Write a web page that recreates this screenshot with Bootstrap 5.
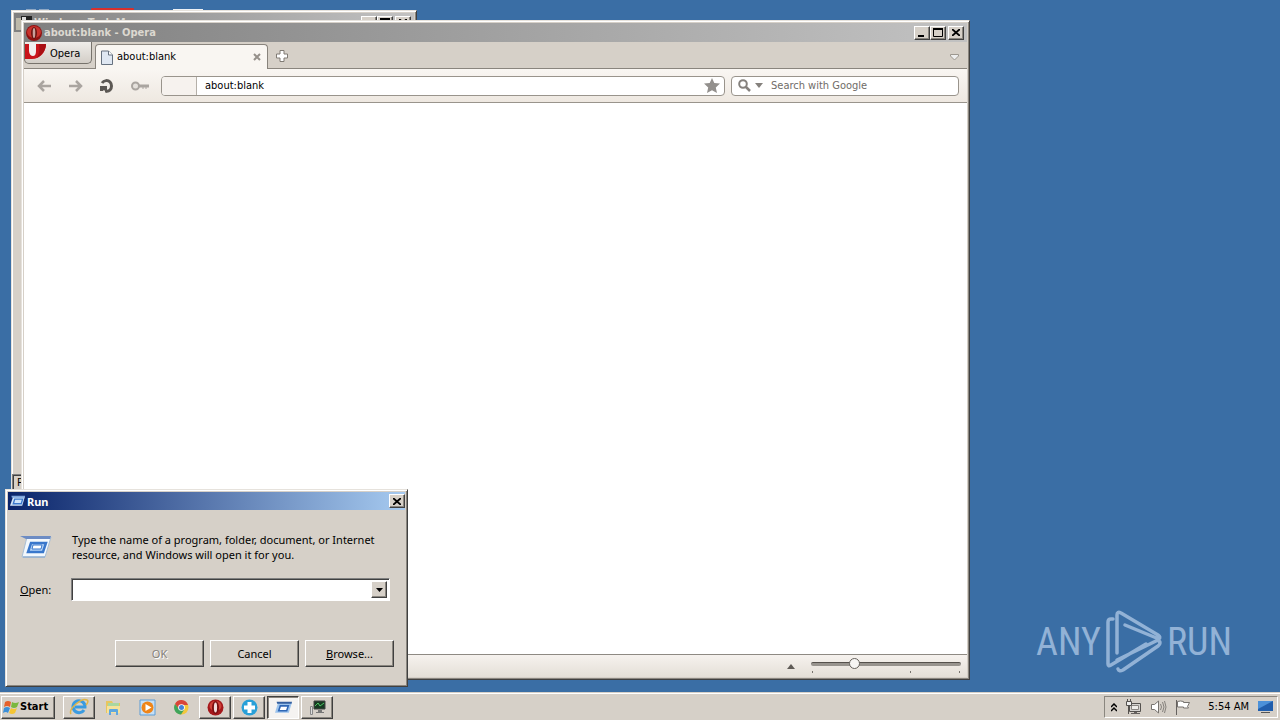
<!DOCTYPE html>
<html lang="en">
<head>
<meta charset="utf-8">
<meta name="viewport" content="width=device-width, initial-scale=1">
<title>Desktop</title>
<link href="https://cdn.jsdelivr.net/npm/bootstrap@5.3.0/dist/css/bootstrap.min.css" rel="stylesheet">
<style>
:root{--face:#d6d0c8;--line:#8a857e}
body{font:11px/16px "DejaVu Sans Condensed","DejaVu Sans",sans-serif;color:#000;background:#3a6ea5}
button,input{font:inherit;color:inherit}
svg{display:block;flex:none}
.desktop{min-height:0}
.win{background:var(--face);border:1px solid;border-color:#e6e2dc #404040 #404040 #e6e2dc;box-shadow:inset 1px 1px #fff,inset -1px -1px #8a867f;padding:2px}
.win-back{left:11px;top:10px;width:406px;bottom:12px;z-index:1}
.win-opera{left:21px;top:20px;right:310px;bottom:12px;z-index:2}
.win-run{left:5px;top:489px;width:403px;height:198px;z-index:3;font-family:"Noto Sans",sans-serif;line-height:15px}
.caption{height:19px;background:linear-gradient(90deg,#808080,#c2c2c2);color:#dcd8d0;font-weight:700;padding:0 3px 0 2px;gap:2px}
.caption-active{height:18px;background:linear-gradient(90deg,#0a246a,#a6caf0);color:#fff}
.sysbtn{width:16px;height:14px;background:var(--face);border:1px solid;border-color:#fff #404040 #404040 #fff;box-shadow:inset -1px -1px #8a867f;padding:0;display:flex;align-items:center;justify-content:center}
.raised{background:var(--face);border:1px solid;border-color:#fff #404040 #404040 #fff;box-shadow:inset -1px -1px #8a867f;padding:0}
.sunken{border:1px solid;border-color:#808080 #fff #fff #808080;box-shadow:inset 1px 1px #404040}
/* browser */
.tabs{height:27px;background:var(--face);border-bottom:1px solid var(--line)}
.menu-btn{width:68px;height:22px;border:1px solid #77736c;border-top:0;border-radius:0 0 5px 5px;background:linear-gradient(#efedea,#d3cec7);padding:0;overflow:hidden}
.menu-btn span{padding-top:3px}
.tab-on{width:173px;height:25px;margin:2px 0 -1px 3px;background:#f9f6f2;border:1px solid #88837c;border-bottom:0;border-radius:4px 4px 0 0;padding:0 6px 0 4px}
.plain{border:0;background:none;padding:0}
.tools{height:34px;background:linear-gradient(#f9f6f2,#eee8e1);border-bottom:1px solid #99948c;padding:0 8px 0 13px}
.nav-icons{gap:16px;margin-right:12px}
.field{height:20px;background:#fff;border:1px solid #99948c;border-radius:4px;overflow:hidden}
.field input{border:0;outline:0;background:none;min-width:0;padding:0}
.site{width:35px;background:#f6f2ee;border-right:1px solid #b5b0a9}
.find{width:228px;margin-left:6px;padding-left:6px}
.find input::placeholder{color:#706c68;opacity:1}
.status{height:23px;background:linear-gradient(#f6f2ee,#e4dfd7);border-top:1px solid #8e8a83;padding-right:6px}
.zoombox{width:150px;height:18px}
.zoombox input{appearance:none;width:100%;height:14px;margin:0;display:block;background:none}
.zoombox input::-webkit-slider-runnable-track{height:4px;border-radius:2px;background:#98948e;border-top:1px solid #55514c}
.zoombox input::-webkit-slider-thumb{appearance:none;width:11px;height:11px;margin-top:-5px;border-radius:50%;border:1px solid #66625d;background:#f6f5f3}
.ticks{height:2px;margin:0 1px}
.ticks i{width:1px;background:#77736d}
/* run dialog */
.run-body{padding:22px 11px 0 12px}
.combo{height:23px;background:#fff;width:319px;padding:2px}
.combo input{border:0;outline:0;min-width:0;padding:0 2px}
.cmds{gap:6px;padding-top:39px}
.cmd{width:89px;height:27px}
.cmd:disabled{color:#85817b;text-shadow:1px 1px #fff}
/* logo */
.brand{right:48px;bottom:18px;color:#92b2d6;font:400 38px/60px "Roboto Condensed","Liberation Sans Narrow",sans-serif}
.peek{top:8px}
/* taskbar */
.taskbar{height:28px;background:var(--face);border-top:1px solid var(--face);box-shadow:inset 0 1px #fff;padding:3px 2px 2px 1px}
.startb{width:54px;height:23px;font-weight:700;padding:0 3px 0 1px}
.tasks{gap:2px}
.task{width:32px;height:23px;display:flex;align-items:center;justify-content:center}
.task-on{border-color:#404040 #fff #fff #404040;background:#f5f3f1;box-shadow:inset 1px 1px #8a867f}
.tray{height:22px;border:1px solid;border-color:#8a867f #fff #fff #8a867f;padding:0 3px 0 6px}
</style>
</head>
<body class="vh-100 d-flex flex-column overflow-hidden">
<main class="desktop position-relative flex-grow-1">
  <svg class="peek position-absolute start-0" width="220" height="3" viewBox="0 0 220 3"><path d="M26 3V1h10v2M39 3V1h10v2" fill="#8fa8c4"/><path d="M91 1q0-1 2-1h40q1 0 1 1v2H91z" fill="#d8302c"/><path d="M173 1h30v2h-30z" fill="#eef2f6"/></svg>

  <section class="win win-back position-absolute" aria-label="Windows Task Manager">
    <div class="caption d-flex align-items-center">
      <svg width="16" height="16"><path d="M0 3h16v12H0z" fill="#bdb9aa"/><path d="M5 1h11v6H5z" fill="#222"/><path d="M6 2h4v3H6z" fill="#ddd"/></svg>
      <span class="me-auto">Windows Task Manager</span>
      <div class="d-flex"><button class="sysbtn" aria-label="Minimize"></button><button class="sysbtn" aria-label="Maximize"><svg width="10" height="9"><path d="M1 1h8v7H1z" fill="none" stroke="#000" stroke-width="2"/></svg></button></div>
      <button class="sysbtn" aria-label="Close"><svg width="8" height="7"><path d="M0 0l8 7M8 0L0 7" stroke="#000" stroke-width="2"/></svg></button>
    </div>
    <div class="position-absolute start-0 sunken px-1" style="top:463px">Processes: 35</div>
  </section>

  <section class="win win-opera position-absolute d-flex flex-column" aria-label="Opera">
    <div class="caption d-flex align-items-center">
      <svg width="16" height="16"><circle cx="8" cy="8" r="8" fill="#8f1010"/><ellipse cx="8" cy="7" rx="7" ry="6" fill="#c9322c"/><ellipse cx="8" cy="8" rx="3" ry="6" fill="#6b1512"/><ellipse cx="8" cy="8" rx="1.3" ry="5" fill="#c9a09b"/></svg>
      <span class="me-auto">about:blank - Opera</span>
      <div class="d-flex"><button class="sysbtn" aria-label="Minimize"><svg width="10" height="9"><path d="M1 7h6v2H1z"/></svg></button><button class="sysbtn" aria-label="Maximize"><svg width="10" height="9"><path d="M.5 1v7.500h9V1" fill="none" stroke="#000"/><path d="M0 0h10v2H0z"/></svg></button></div>
      <button class="sysbtn" aria-label="Close"><svg width="8" height="7"><path d="M0 0l8 7M8 0L0 7" stroke="#000" stroke-width="1.800"/></svg></button>
    </div>
    <div class="tabs d-flex align-items-start">
      <button class="menu-btn d-flex align-items-center"><svg width="21" height="22"><path d="M0 2h21c0 8-6 15-14 15H0z" fill="#c9141b"/><path d="M4 1h7v8c0 3-1 5-3 5s-4-2-4-5z" fill="#f1eeee"/><path d="M14 2h7c0 6-4 11-9 14 2-4 3-8 2-14z" fill="#a90f14"/></svg><span class="ms-1">Opera</span></button>
      <div class="tab-on d-flex align-items-center">
        <svg width="13" height="15"><path d="M1.500 1h7l4 4v9.500h-11z" fill="#dfe7f2" stroke="#66717f"/><path d="M8.500 1v4h4" fill="#fff" stroke="#66717f"/></svg>
        <span class="ms-1 me-auto">about:blank</span>
        <button class="plain" aria-label="Close tab"><svg width="8" height="8"><path d="M1 1l6 6M7 1L1 7" stroke="#96918b" stroke-width="2"/></svg></button>
      </div>
      <button class="plain ms-2 mt-2" aria-label="New tab"><svg width="12" height="12"><path d="M4 .5h4V4h3.500v4H8v3.500H4V8H.5V4H4z" fill="#fff" stroke="#807b74"/></svg></button>
      <button class="plain ms-auto mt-2 me-2 pt-1" aria-label="Closed tabs"><svg width="9" height="7"><path d="M.5.5h8v1.500l-4 4-4-4z" fill="#eee" stroke="#9c978f"/></svg></button>
    </div>
    <div class="tools d-flex align-items-center">
      <div class="nav-icons d-flex align-items-center">
        <button class="plain" aria-label="Back"><svg width="15" height="12"><path d="M14 6H3M7 1L2 6l5 5" fill="none" stroke="#aaa5a0" stroke-width="2.500"/></svg></button>
        <button class="plain" aria-label="Forward"><svg width="15" height="12"><path d="M1 6h11M8 1l5 5-5 5" fill="none" stroke="#aaa5a0" stroke-width="2.500"/></svg></button>
        <button class="plain" aria-label="Reload"><svg width="16" height="14"><path d="M3 4C5 1 9 1 11 3s2 6 0 8-4 1-5 1" fill="none" stroke="#5c5854" stroke-width="3"/><path d="M1 7h7v7z" fill="#5c5854"/><path d="M1 7h7L4 12H1z" fill="#5c5854"/></svg></button>
        <button class="plain" aria-label="Passwords"><svg width="18" height="10"><circle cx="4.500" cy="5" r="3.500" fill="#e5e1dc" stroke="#aaa5a0" stroke-width="2"/><path d="M8 5h10" stroke="#aaa5a0" stroke-width="3"/><path d="M12 6v2M15 6v2" stroke="#aaa5a0"/></svg></button>
      </div>
      <div class="field d-flex align-items-center flex-grow-1"><span class="site align-self-stretch"></span><input class="flex-grow-1 ms-2" value="about:blank" aria-label="Address"><svg width="16" height="15" class="me-1"><path d="M8 0l2.300 5 5.700.6-4.200 3.800 1.200 5.600L8 12.200 3 15l1.200-5.600L0 5.600 5.700 5z" fill="#93908d"/></svg></div>
      <div class="field find d-flex align-items-center"><svg width="13" height="13"><circle cx="5" cy="5" r="3.800" fill="none" stroke="#85817d" stroke-width="2"/><path d="M8 8l4 4" stroke="#85817d" stroke-width="2.500"/></svg><svg width="8" height="5" class="ms-1 me-2"><path d="M0 0h8L4 5z" fill="#85817d"/></svg><input class="flex-grow-1" placeholder="Search with Google" aria-label="Search with Google"></div>
    </div>
    <div class="bg-white flex-grow-1"></div>
    <div class="status d-flex align-items-center justify-content-end">
      <button class="plain me-3" aria-label="Show panel"><svg width="8" height="5"><path d="M0 5h8L4 0z" fill="#5f5b56"/></svg></button>
      <div class="zoombox"><input type="range" min="0" max="100" value="27" aria-label="Zoom"><div class="ticks d-flex"><i></i><i class="ms-auto"></i><i class="ms-5"></i></div></div>
    </div>
  </section>

  <section class="win win-run position-absolute" role="dialog" aria-label="Run">
    <div class="caption caption-active d-flex align-items-center pe-0">
      <svg width="15" height="12" viewBox="0 0 32 24"><path d="M7 2h25l-6 20H0z" fill="#d5e6f8"/><path d="M3 1h29l-1 4H4z" fill="#7fa6dc"/><path d="M10 8h17l-3 10H7z" fill="#cfe5fb" stroke="#3b78cc" stroke-width="3"/></svg>
      <span class="me-auto">Run</span>
      <button class="sysbtn" aria-label="Close"><svg width="8" height="7"><path d="M0 0l8 7M8 0L0 7" stroke="#000" stroke-width="1.800"/></svg></button>
    </div>
    <div class="run-body">
      <div class="d-flex align-items-center">
        <svg width="32" height="24" viewBox="0 0 32 24"><path d="M7 2h24l-6 20H2z" fill="#f3f8fd" stroke="#a8bed5"/><path d="M0 1h31l-1 3H6z" fill="#6d8cc4"/><path d="M11 8h15l-3 9H8z" fill="#b7d5f7" stroke="#3977cc" stroke-width="2.500"/><path d="M13 10h9l-1 4h-9z" fill="#fff" stroke="#3977cc"/><path d="M3 22h22" stroke="#7fa2cc"/></svg>
        <p class="mb-0 ms-3 ps-1">Type the name of a program, folder, document, or Internet<br>resource, and Windows will open it for you.</p>
      </div>
      <div class="d-flex align-items-center justify-content-between mt-3 pe-1">
        <label for="cmd"><u>O</u>pen:</label>
        <div class="combo sunken d-flex"><input id="cmd" class="flex-grow-1"><button class="sysbtn h-100" aria-label="Show history"><svg width="7" height="4"><path d="M0 0h7L3.500 4z"/></svg></button></div>
      </div>
      <div class="cmds d-flex justify-content-end">
        <button class="raised cmd" disabled>OK</button><button class="raised cmd">Cancel</button><button class="raised cmd"><u>B</u>rowse...</button>
      </div>
    </div>
  </section>

  <div class="brand position-absolute d-flex align-items-center">
    <span>ANY</span>
    <svg width="58" height="64" class="mx-1" viewBox="0 0 58 64" fill="none" stroke="#92b2d6" stroke-width="3.500" stroke-linejoin="round" stroke-linecap="round"><path d="M8 9H6Q3 9 3 12v42q0 3 3 1L41 34M12 43V5q0-4 4-2l37 22q3 2 1 4L20 15M12 50l41-20q4 3 0 6L18 60q-4 2-5-1"/></svg>
    <span>RUN</span>
  </div>
</main>

<footer class="taskbar d-flex align-items-center">
  <button class="raised startb d-flex align-items-center me-2"><svg width="17" height="16"><path d="M2 3q3-2 6 0L7 8Q4 6 1 8z" fill="#e5602b"/><path d="M9 3q3 2 7 0l-2 5q-3 2-6 0z" fill="#7ab83e"/><path d="M1 9q3-2 6 0l-2 5q-2-2-5 0z" fill="#3b8fd8"/><path d="M8 9q3 2 6 0l-2 5q-3 2-6 0z" fill="#f5c533"/></svg><span>Start</span></button>
  <nav class="tasks d-flex" aria-label="Tasks">
    <button class="raised task" aria-label="Internet Explorer"><svg width="20" height="18"><path d="M15 12a6 6 0 1 1 1-3H6" fill="none" stroke="#3a9be0" stroke-width="3"/><path d="M2 16C-1 11 13-1 18 2c2 1 0 4-1 5" fill="none" stroke="#e2b544" stroke-width="1.500"/></svg></button>
    <button class="plain task" aria-label="Explorer"><svg width="17" height="16"><path d="M1 2h6l1 2h7v10H1z" fill="#e8c65e"/><path d="M3 4h11v5H3z" fill="#a9d7a0"/><path d="M2 7h13v7H2z" fill="#f6e29a"/><path d="M4 16v-5q0-1 1-1h7q1 0 1 1v5h-2v-3H6v3z" fill="#5ea7df"/></svg></button>
    <button class="plain task" aria-label="Media Player"><svg width="17" height="17"><path d="M1 1h15v15H1z" fill="#c6dff5" stroke="#5d9dd6"/><circle cx="8.500" cy="8.500" r="6" fill="#ef8519"/><path d="M6.500 5l6 3.500-6 3.500z" fill="#fff"/></svg></button>
    <button class="plain task" aria-label="Chrome"><svg width="15" height="15"><circle cx="7.500" cy="7.500" r="7" fill="#f3c73c"/><path d="M1 4a7 7 0 0 1 13 1H7.500L5 9z" fill="#d9453a"/><path d="M1 4a7 7 0 0 0 6 10.500L10 10 5 9z" fill="#3fa45b"/><circle cx="7.500" cy="7.500" r="3.300" fill="#fff"/><circle cx="7.500" cy="7.500" r="2.500" fill="#4482d8"/></svg></button>
    <button class="raised task" aria-label="Opera"><svg width="17" height="17"><circle cx="8.500" cy="8.500" r="8" fill="#a5171a"/><ellipse cx="8.500" cy="7" rx="6" ry="5" fill="#cf4138"/><ellipse cx="8.500" cy="8.500" rx="3.500" ry="6.500" fill="#7b0d0f"/><ellipse cx="8.500" cy="8.500" rx="1.600" ry="5" fill="#f2dddb"/></svg></button>
    <button class="raised task" aria-label="Add"><svg width="17" height="17"><circle cx="8.500" cy="8.500" r="8" fill="#29a0d8"/><path d="M6.500 3h4v3.500H14v4h-3.500V14h-4v-3.500H3v-4h3.500z" fill="#fff"/></svg></button>
    <button class="raised task task-on" aria-label="Run"><svg width="17" height="13" viewBox="0 0 32 24"><path d="M6 2h26l-6 20H0z" fill="#9cc3ec"/><path d="M3 1h29l-1 4H4z" fill="#345f9f"/><path d="M10 9h15l-3 9H7z" fill="#fff" stroke="#2f67b5" stroke-width="3"/></svg></button>
    <button class="raised task" aria-label="Task Manager"><svg width="17" height="15"><path d="M1.500 6.500h2v8h-2z" fill="#ddd" stroke="#888"/><path d="M5 1h11v8H5z" fill="#173b22" stroke="#444"/><path d="M6 6l3-3 2 3 4-3" stroke="#4ec765" fill="none"/><path d="M9 10h4v2H9zM7 12h8v1H7z" fill="#777"/></svg></button>
  </nav>
  <div class="tray d-flex align-items-center ms-auto">
    <button class="plain" aria-label="Show hidden icons"><svg width="6" height="9"><path d="M0 4l3-3 3 3M0 8l3-3 3 3" fill="none" stroke="#000" stroke-width="1.500"/></svg></button>
    <svg width="17" height="16" class="ms-2 me-2"><path d="M4.500 4.500h11v8h-11z" fill="#d5d3d0" stroke="#55524f"/><path d="M6.500 6.500h7v4h-7z" fill="#efedea" stroke="#8a8682"/><path d="M9 13h3v1H9zM6 14h9v1H6z" fill="#66625f"/><path d="M1.500 2.500h5v4h-5zM2.500 0v2M5.500 0v2M3.500 7v8" fill="#eee" stroke="#55524f"/></svg>
    <svg width="17" height="16"><path d="M1.500 5.500h3L8.500 2v12l-4-3.500h-3z" fill="#fff" stroke="#77736f"/><path d="M10.500 5q2 3 0 6M12.500 3q3 5 0 10M14.500 2q3 6 0 12" fill="none" stroke="#85817c"/></svg>
    <svg width="17" height="16" class="ms-2 me-3"><path d="M1.500 1v15" stroke="#66625f"/><path d="M2.500 2.500q3-1 6 0v1h6l-2 4 1 1.500H8.500v-1h-6z" fill="#fff" stroke="#77736f"/></svg>
    <time>5:54 AM</time>
    <svg width="17" height="14" class="ms-2"><path d="M1 1h15v10H1z" fill="#215eac"/><path d="M1 1h15L1 9z" fill="#4c91d9"/><path d="M4 12h9v1H4z" fill="#555"/></svg>
  </div>
</footer>
<script src="https://cdn.jsdelivr.net/npm/bootstrap@5.3.0/dist/js/bootstrap.bundle.min.js"></script>
</body>
</html>
